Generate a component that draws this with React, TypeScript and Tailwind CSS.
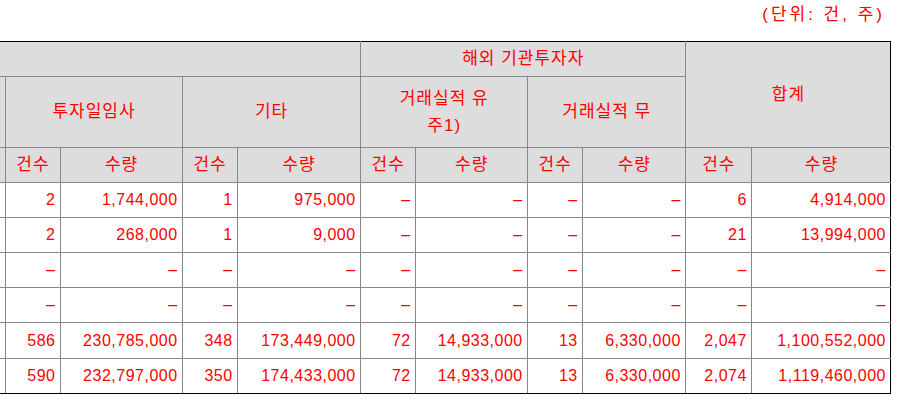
import React from "react"

const D = "–"

const rows: string[][] = [
  ["2", "1,744,000", "1", "975,000", D, D, D, D, "6", "4,914,000"],
  ["2", "268,000", "1", "9,000", D, D, D, D, "21", "13,994,000"],
  [D, D, D, D, D, D, D, D, D, D],
  [D, D, D, D, D, D, D, D, D, D],
  ["586", "230,785,000", "348", "173,449,000", "72", "14,933,000", "13", "6,330,000", "2,047", "1,100,552,000"],
  ["590", "232,797,000", "350", "174,433,000", "72", "14,933,000", "13", "6,330,000", "2,074", "1,119,460,000"],
]

const widths = [5, 55, 122, 55, 123, 55, 112, 55, 103, 66, 139]

const th = "border border-[#888888] bg-[#dddddd] font-normal text-[17px] text-center align-middle tracking-[1px] pl-[1px] p-0"
const td = "border border-[#888888] text-right align-middle tracking-[0.5px] pr-[4px] p-0"

export default function App() {
  return (
    <div
      className="w-[901px] h-[400px] bg-white text-[#ff0000] text-[16px] overflow-hidden"
      style={{ fontFamily: '"Liberation Sans", "Noto Sans CJK KR", sans-serif' }}
    >
      {/* unit caption */}
      <div className="h-[41px] flex justify-end pr-[16px] pt-[3px] leading-[24px] text-[17px] tracking-[3px]">
        (단위: 건, 주)
      </div>

      <table className="table-fixed border-collapse w-[891px] border-t border-t-black border-r border-r-black border-b border-b-black">
        <colgroup>
          {widths.map((w, i) => (
            <col key={i} style={{ width: w }} />
          ))}
        </colgroup>
        <thead>
          <tr className="h-[35px]">
            <th colSpan={5} className={`${th} border-l-0 border-t-black`}></th>
            <th colSpan={4} className={`${th} border-t-black`}>해외 기관투자자</th>
            <th colSpan={2} rowSpan={2} className={`${th} border-t-black border-r-black`}>합계</th>
          </tr>
          <tr className="h-[71px]">
            <th className={`${th} border-l-0`}></th>
            <th colSpan={2} className={th}>투자일임사</th>
            <th colSpan={2} className={th}>기타</th>
            <th colSpan={2} className={`${th} leading-[27px]`}>
              거래실적 유
              <br />
              주1)
            </th>
            <th colSpan={2} className={th}>거래실적 무</th>
          </tr>
          <tr className="h-[35px]">
            <th className={`${th} border-l-0`}></th>
            {[0, 1, 2, 3, 4].map((i) => (
              <React.Fragment key={i}>
                <th className={th}>건수</th>
                <th className={`${th} ${i === 4 ? "border-r-black" : ""}`}>수량</th>
              </React.Fragment>
            ))}
          </tr>
        </thead>
        <tbody>
          {rows.map((r, ri) => (
            <tr key={ri} className={ri === 4 ? "h-[36px]" : "h-[35px]"}>
              <td className={`${td} border-l-0 ${ri === 5 ? "border-b-black" : ""}`}></td>
              {r.map((v, ci) => (
                <td
                  key={ci}
                  className={`${td} ${ci === 9 ? "border-r-black" : ""} ${ri === 5 ? "border-b-black" : ""}`}
                >
                  {v}
                </td>
              ))}
            </tr>
          ))}
        </tbody>
      </table>
    </div>
  )
}
